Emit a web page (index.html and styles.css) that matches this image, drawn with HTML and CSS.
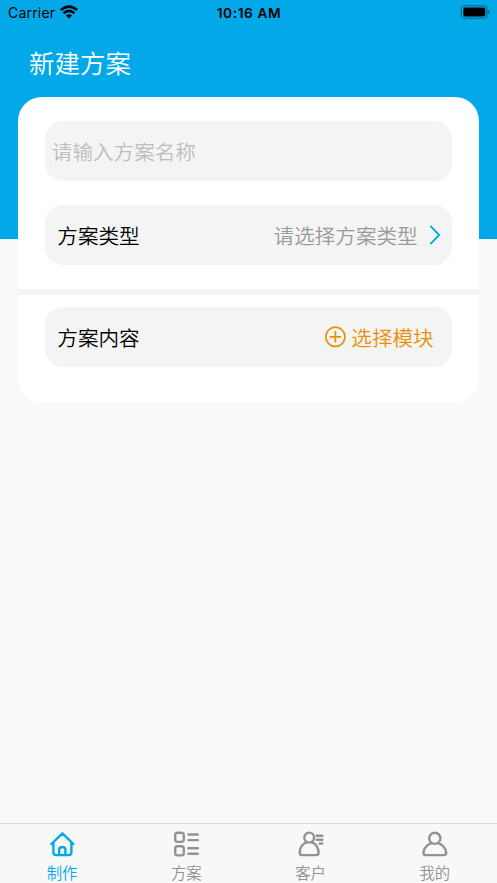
FILE: index.html
```html
<!DOCTYPE html>
<html lang="zh-CN">
<head>
<meta charset="utf-8">
<meta name="viewport" content="width=device-width, initial-scale=1">
<title>新建方案</title>
<link rel="stylesheet" href="styles.css">
</head>
<body>
<div class="app">
  <header class="status-bar">
    <div class="carrier"><span>Carrier</span>
      <svg class="wifi" width="18" height="14" viewBox="0 0 18 14"><g fill="none" stroke="#000" stroke-width="2.7"><path d="M.9 5.1Q9-2 17.1 5.1"/><path d="M3.7 8.3Q9 3.6 14.3 8.3"/></g><path d="M5.9 10.5Q9 7.8 12.1 10.5L9 13.5Z"/></svg>
    </div>
    <time class="clock">10:16 AM</time>
    <svg class="battery" width="30" height="14" viewBox="0 0 30 14"><rect x="1.3" y=".8" width="25.7" height="12.4" rx="3.5" fill="none" stroke="#000" stroke-opacity=".4" stroke-width="1.1"/><rect x="3.3" y="2.6" width="22" height="8.8" rx="1.8"/><path d="M28.2 4.8Q29.5 5.5 29.5 7T28.2 9.2Z" opacity=".45"/></svg>
  </header>
  <h1 class="title">新建方案</h1>
  <main class="card">
    <input class="field name-input" placeholder="请输入方案名称">
    <div class="field row">
      <span>方案类型</span>
      <span class="picker">请选择方案类型
        <svg width="12" height="20" viewBox="0 0 12 20"><path d="M1.3.8L10.2 10L1.3 19.2" fill="none" stroke="#02a7e8" stroke-width="1.8"/></svg>
      </span>
    </div>
    <div class="divider"></div>
    <div class="field row content-row">
      <span>方案内容</span>
      <span class="add"><svg width="22" height="22" viewBox="0 0 22 22"><g fill="none" stroke="#e98f05" stroke-width="1.7"><circle cx="11.4" cy="10.8" r="9.6"/><path d="M5.7 10.8H17.1M11.4 5.1V16.5"/></g></svg>选择模块</span>
    </div>
  </main>
  <nav class="tabs">
    <a class="tab active">
      <svg width="26" height="26" viewBox="0 0 26 26"><path d="M2.4 13L13.4 2.3L24.4 13M4.4 11.5V21.5Q4.4 24.1 7 24.1H19.8Q22.4 24.1 22.4 21.5V11.5M10.2 23.5V18.5Q10.2 16.2 12.4 16.2H14.2Q16.4 16.2 16.4 18.5V23.5"/></svg>
      <span>制作</span>
    </a>
    <a class="tab">
      <svg width="26" height="26" viewBox="0 0 26 26"><rect x="2.2" y="1.7" width="8.6" height="9.2" rx="2.4"/><rect x="2.2" y="15.2" width="8.6" height="9.2" rx="2.4"/><path d="M15.4 3.5H24.8M15.4 9.1H24.8M15.4 17.2H24.8M15.4 22.8H24.8"/></svg>
      <span>方案</span>
    </a>
    <a class="tab">
      <svg width="26" height="26" viewBox="0 0 26 26"><ellipse cx="11.2" cy="6.6" rx="4.9" ry="5"/><path d="M8.5 11.4C4.6 12.7 1.9 16.6 1.7 21.8Q1.7 24.1 4 24.1H18.3Q20.6 24.1 20.6 21.8C20.4 16.6 17.8 12.7 13.9 11.4M18.7 4.7H24.3M18.7 8.7H24.3M21.7 12.5H24.3"/></svg>
      <span>客户</span>
    </a>
    <a class="tab">
      <svg width="26" height="26" viewBox="0 0 26 26"><circle cx="12.8" cy="7.3" r="5.6"/><path d="M9.7 12.2C4.9 13.5 1.4 17.7 1.4 21.8Q1.4 24.1 3.8 24.1H21.8Q24.2 24.1 24.2 21.8C24.2 17.7 20.7 13.5 15.9 12.2"/></svg>
      <span>我的</span>
    </a>
  </nav>
</div>
</body>
</html>
```
FILE: styles.css
```css
* { box-sizing: border-box; }
body {
  margin: 0;
  font-family: "Noto Sans CJK SC", sans-serif;
  font-weight: 350;
  color: #000;
}
.app {
  display: flex;
  flex-direction: column;
  height: 883px;
  background: linear-gradient(#02a8e8 239px, #f9f9f9 239px);
}
.status-bar {
  display: grid;
  grid-template-columns: 1fr auto 1fr;
  align-items: center;
  height: 26px;
  padding: 0 7px 0 8px;
  font: 14px/26px Inter, sans-serif;
}
.carrier { display: flex; align-items: center; gap: 5px; letter-spacing: 0.2px; }
.wifi { margin-top: -2px; }
.clock { font-size: 13.7px; font-weight: 600; letter-spacing: 0.6px; }
.battery { justify-self: end; margin-top: -2px; }
.title {
  height: 71px;
  margin: 0;
  padding: 17px 0 0 29px;
  font-size: 25.5px;
  line-height: 37px;
  font-weight: 350;
  color: #fff;
}
.card {
  height: 305.5px;
  margin: 0 18.3px;
  padding-top: 24px;
  border-radius: 24px;
  background: #fff;
}
.field {
  display: flex;
  width: auto;
  height: 60px;
  margin: 0 27px;
  border-radius: 18px;
  background: #f4f4f4;
  font-size: 20.6px;
}
.name-input {
  width: calc(100% - 54px);
  border: 0;
  padding: 0 6.5px;
  font-family: inherit;
  font-weight: inherit;
  outline: none;
}
.name-input::placeholder { color: #bdbdbd; opacity: 1; }
.row {
  align-items: center;
  justify-content: space-between;
  margin-top: 24px;
  padding: 0 11px 0 12px;
}
.picker { display: flex; align-items: center; gap: 11px; color: #999; }
.divider { height: 6px; margin-top: 24px; background: #f4f4f4; }
.content-row { margin-top: 12px; padding: 0 18px 1px 12px; }
.add { display: flex; align-items: center; gap: 5px; color: #e98f05; }
.tabs {
  display: grid;
  grid-template-columns: repeat(4, 1fr);
  height: 60px;
  margin-top: auto;
  border-top: 1px solid #d9d9d9;
  background: #f8f8f8;
}
.tab {
  display: flex;
  flex-direction: column;
  align-items: center;
  padding-top: 7px;
  color: #929292;
  font-size: 15.4px;
  line-height: 22px;
}
.tab span { margin-top: 4px; }
.tab svg {
  fill: none;
  stroke: currentColor;
  stroke-width: 2.4;
  stroke-linecap: round;
  stroke-linejoin: round;
}
.active { color: #02a8e8; }
```
